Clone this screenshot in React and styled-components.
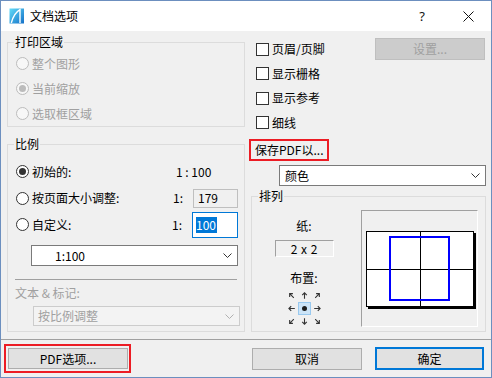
import React from "react";
import styled, { createGlobalStyle, css } from "styled-components";

const FONT = `"Noto Sans CJK SC", "Noto Sans", sans-serif`;

const GlobalStyle = createGlobalStyle`
  html, body { margin: 0; padding: 0; background: #ffffff; }
  body { font-family: ${FONT}; font-size: 12px; }
  *, *::before, *::after { box-sizing: border-box; }
`;

const Window = styled.div`
  width: 492px;
  height: 378px;
  border: 1px solid #6c8fbf;
  background: #f0f0f0;
  display: flex;
  flex-direction: column;
  font-family: ${FONT};
  font-size: 12px;
  line-height: 16px;
  color: #000;
  overflow: hidden;
`;

const TitleBar = styled.div`
  height: 30px;
  flex: none;
  background: #fff;
  display: flex;
  align-items: center;
  padding-left: 8px;
`;

const TitleText = styled.span`
  margin-left: 5px;
  flex: 1;
`;

const CaptionButton = styled.div`
  width: 46px;
  height: 30px;
  display: flex;
  align-items: center;
  justify-content: center;
  font-family: "Noto Sans", sans-serif;
  font-size: 13px;
  color: #111;
`;

const Main = styled.div`
  height: 308px;
  flex: none;
  display: flex;
  gap: 4px;
  padding: 3px 5px 7px 6px;
`;

const LeftCol = styled.div`
  width: 238px;
  display: flex;
  flex-direction: column;
  gap: 9px;
`;

const RightCol = styled.div`
  width: 237px;
  display: flex;
  flex-direction: column;
  padding-top: 3px;
`;

const Group = styled.fieldset`
  margin: ${(p) => p.$margin || "0"};
  min-width: 0;
  border: 1px solid #dcdcdc;
  padding: ${(p) => p.$pad};
`;

const Legend = styled.legend`
  padding: 0 1px;
  margin-left: ${(p) => p.$x}px;
  line-height: 16px;
  font-size: 12px;
  color: #000;
`;

const RadioRow = styled.div`
  height: ${(p) => p.$h}px;
  display: flex;
  align-items: center;
  gap: 3px;
  color: ${(p) => (p.$disabled ? "#a0a0a0" : "#000")};
`;

const RadioCircle = styled.span`
  width: 13px;
  height: 13px;
  flex: none;
  border-radius: 50%;
  border: 1px solid ${(p) => (p.$disabled ? "#bcbcbc" : "#333")};
  background: ${(p) => (p.$disabled ? "#f7f7f7" : "#fff")};
  display: flex;
  align-items: center;
  justify-content: center;
  &::after {
    content: "";
    width: 7px;
    height: 7px;
    border-radius: 50%;
    background: ${(p) => (p.$disabled ? "#bcbcbc" : "#333")};
    display: ${(p) => (p.$checked ? "block" : "none")};
  }
`;

const RadioLabel = styled.span`
  flex: 1;
  white-space: nowrap;
`;

const RatioPrefix = styled.span`
  width: ${(p) => p.$w}px;
  flex: none;
  white-space: nowrap;
`;

const ValueBox = styled.div`
  width: ${(p) => p.$w}px;
  height: ${(p) => p.$h}px;
  flex: none;
  display: flex;
  align-items: center;
  padding-left: ${(p) => p.$pl}px;
  border: 1px solid ${(p) => (p.$focused ? "#0078d7" : "#bfbfbf")};
  background: ${(p) => (p.$focused ? "#fff" : "#f0f0f0")};
`;

const Selected = styled.span`
  background: #0078d7;
  color: #fff;
  line-height: 16px;
  padding: 0 1px 0 0;
`;

const Combo = styled.div`
  width: 207px;
  height: ${(p) => p.$h}px;
  margin-left: ${(p) => p.$ml}px;
  margin-top: ${(p) => p.$mt}px;
  flex: none;
  display: flex;
  align-items: center;
  padding-left: ${(p) => p.$pl}px;
  padding-right: 5px;
  border: 1px solid ${(p) => (p.$disabled ? "#cccccc" : "#7a7a7a")};
  background: ${(p) => (p.$disabled ? "#f3f3f3" : "#fff")};
  color: ${(p) => (p.$disabled ? "#a0a0a0" : "#000")};
`;

const ComboText = styled.span`
  flex: 1;
`;

const Chevron = ({ disabled }) => (
  <svg width="9" height="5" viewBox="0 0 9 5">
    <polyline
      points="0.5,0.5 4.5,4.5 8.5,0.5"
      fill="none"
      stroke={disabled ? "#b0b0b0" : "#333"}
      strokeWidth="1"
    />
  </svg>
);

const Divider = styled.div`
  height: 1px;
  margin: 13px 1px 0 -1px;
  background: #a0a0a0;
`;

const Caption = styled.div`
  margin: 5px 0 0 -1px;
  height: 16px;
  color: ${(p) => (p.$disabled ? "#a0a0a0" : "#000")};
`;

const TopRow = styled.div`
  display: flex;
  justify-content: space-between;
  align-items: flex-start;
`;

const CheckList = styled.div`
  display: flex;
  flex-direction: column;
  padding-left: 7px;
`;

const CheckRow = styled.div`
  height: 24.5px;
  display: flex;
  align-items: center;
  gap: 3px;
`;

const CheckBox = styled.span`
  width: 13px;
  height: 13px;
  border: 1px solid #333;
  background: #fff;
  flex: none;
`;

const Button = styled.div`
  width: ${(p) => p.$w}px;
  height: ${(p) => p.$h}px;
  margin: ${(p) => p.$m || "0"};
  flex: none;
  display: flex;
  align-items: center;
  justify-content: center;
  background: ${(p) => (p.$disabled ? "#cccccc" : "#e1e1e1")};
  border: ${(p) =>
    p.$default ? "2px solid #0078d7" : p.$disabled ? "1px solid #bfbfbf" : "1px solid #adadad"};
  color: ${(p) => (p.$disabled ? "#a0a0a0" : "#000")};
`;

const Highlight = styled.div`
  align-self: ${(p) => (p.$inline ? "auto" : "flex-start")};
  margin-top: ${(p) => p.$mt}px;
  width: ${(p) => (p.$w ? `${p.$w}px` : "auto")};
  height: ${(p) => (p.$h ? `${p.$h}px` : "auto")};
  border: 2px solid #ec1c24;
  display: flex;
  align-items: center;
  padding: ${(p) => p.$pad};
`;

const ArrangeBody = styled.div`
  display: flex;
  gap: 5px;
`;

const ArrangeInfo = styled.div`
  width: 104px;
  display: flex;
  flex-direction: column;
  align-items: center;
  padding-top: 8px;
`;

const InfoLabel = styled.div`
  height: 16px;
  margin-top: ${(p) => p.$mt}px;
`;

const PaperBox = styled.div`
  width: 59px;
  height: 17px;
  margin-top: 6px;
  display: flex;
  align-items: center;
  justify-content: center;
  border-top: 1px solid #a0a0a0;
  border-left: 1px solid #a0a0a0;
  border-bottom: 1px solid #fff;
  border-right: 1px solid #fff;
  line-height: 15px;
  word-spacing: 1px;
`;

const PlaceGrid = styled.div`
  margin-top: 3px;
  display: grid;
  grid-template-columns: repeat(3, 13px);
  grid-auto-rows: 13px;
`;

const PlaceCell = styled.div`
  display: flex;
  align-items: center;
  justify-content: center;
  ${(p) =>
    p.$active &&
    css`
      background: #cce4f7;
      border: 1px solid #99c9ef;
    `}
`;

const Dot = styled.span`
  width: 5px;
  height: 5px;
  border-radius: 50%;
  background: #1e1e1e;
`;

const ArrowSvg = styled.svg`
  transform: rotate(${(p) => p.$angle}deg);
`;

const Arrow = ({ angle }) => (
  <ArrowSvg $angle={angle} width="7" height="7" viewBox="0 0 7 7">
    <path d="M3.5 6.8 V0.9 M1.2 3.2 L3.5 0.9 L5.8 3.2" fill="none" stroke="#333" strokeWidth="1.1" />
  </ArrowSvg>
);

const Preview = styled.div`
  width: 117px;
  height: 117px;
  padding: 20px 0 0 4px;
  border-top: 1px solid #a0a0a0;
  border-left: 1px solid #a0a0a0;
  border-bottom: 1px solid #fff;
  border-right: 1px solid #fff;
`;

const Separator = styled.div`
  height: 1px;
  flex: none;
  background: #a0a0a0;
`;

const Footer = styled.div`
  height: 37px;
  flex: none;
  display: flex;
  align-items: center;
  padding: 0 7px 0 3px;
`;

const FooterRight = styled.div`
  margin-left: auto;
  display: flex;
  align-items: center;
  gap: 13px;
`;

const TitleIcon = () => (
  <svg width="16" height="16" viewBox="0 0 16 16">
    <defs>
      <linearGradient id="tiGrad" x1="0" y1="0" x2="1" y2="1">
        <stop offset="0" stopColor="#62dcf8" />
        <stop offset="1" stopColor="#1470c8" />
      </linearGradient>
    </defs>
    <rect x="0.5" y="0.5" width="14.5" height="15" fill="url(#tiGrad)" />
    <path d="M2.3 15 C3.8 9 6.8 4 11 1.6 L11 15" fill="none" stroke="#fff" strokeWidth="1.4" />
  </svg>
);

const CloseIcon = () => (
  <svg width="11" height="11" viewBox="0 0 11 11">
    <path d="M0.5 0.5 L10.5 10.5 M10.5 0.5 L0.5 10.5" stroke="#111" strokeWidth="1" />
  </svg>
);

const PagePreview = () => (
  <svg width="110" height="78" viewBox="0 0 110 78">
    <rect x="2" y="2" width="108" height="76" fill="#000" />
    <rect x="0.5" y="0.5" width="107" height="75" fill="#fff" stroke="#000" strokeWidth="1" />
    <line x1="54.5" y1="0" x2="54.5" y2="76" stroke="#000" strokeWidth="1" />
    <line x1="0" y1="38.5" x2="108" y2="38.5" stroke="#000" strokeWidth="1" />
    <rect x="24" y="6" width="59" height="63" fill="none" stroke="#0000ff" strokeWidth="2" />
  </svg>
);

const arrows = [
  { a: -45 },
  { a: 0 },
  { a: 45 },
  { a: -90 },
  { center: true },
  { a: 90 },
  { a: -135 },
  { a: 180 },
  { a: 135 },
];

function Radio({ label, checked, disabled, h = 25, children }) {
  return (
    <RadioRow $h={h} $disabled={disabled}>
      <RadioCircle $checked={checked} $disabled={disabled} />
      <RadioLabel>{label}</RadioLabel>
      {children}
    </RadioRow>
  );
}

export default function App() {
  return (
    <>
      <GlobalStyle />
      <Window>
        <TitleBar>
          <TitleIcon />
          <TitleText>文档选项</TitleText>
          <CaptionButton>?</CaptionButton>
          <CaptionButton>
            <CloseIcon />
          </CaptionButton>
        </TitleBar>

        <Main>
          <LeftCol>
            <Group $pad="1px 6px 0 8px">
              <Legend $x={-2}>打印区域</Legend>
              <Radio label="整个图形" disabled />
              <Radio label="当前缩放" disabled checked />
              <Radio label="选取框区域" disabled />
            </Group>

            <Group $pad="6px 6px 5px 8px">
              <Legend $x={-2}>比例</Legend>
              <Radio label="初始的:" checked h={27}>
                <RatioPrefix $w={62}>1 : 100</RatioPrefix>
              </Radio>
              <Radio label="按页面大小调整:" h={26}>
                <RatioPrefix $w={17}>1:</RatioPrefix>
                <ValueBox $w={45} $h={19} $pl={4}>179</ValueBox>
              </Radio>
              <Radio label="自定义:" h={27}>
                <RatioPrefix $w={17}>1:</RatioPrefix>
                <ValueBox $w={46} $h={26} $pl={3} $focused>
                  <Selected>100</Selected>
                </ValueBox>
              </Radio>
              <Combo $h={21} $ml={15} $mt={7} $pl={23}>
                <ComboText>1:100</ComboText>
                <Chevron />
              </Combo>
              <Divider />
              <Caption $disabled>文本 &amp; 标记:</Caption>
              <Combo $h={20} $ml={17} $mt={5} $pl={4} $disabled>
                <ComboText>按比例调整</ComboText>
                <Chevron disabled />
              </Combo>
            </Group>
          </LeftCol>

          <RightCol>
            <TopRow>
              <CheckList>
                <CheckRow>
                  <CheckBox />
                  <span>页眉/页脚</span>
                </CheckRow>
                <CheckRow>
                  <CheckBox />
                  <span>显示栅格</span>
                </CheckRow>
                <CheckRow>
                  <CheckBox />
                  <span>显示参考</span>
                </CheckRow>
                <CheckRow>
                  <CheckBox />
                  <span>细线</span>
                </CheckRow>
              </CheckList>
              <Button $w={110} $h={22} $m="1px 1px 0 0" $disabled>
                设置...
              </Button>
            </TopRow>

            <Highlight $mt={4} $w={80} $h={23} $pad="0 0 0 4px">
              保存PDF以...
            </Highlight>

            <Combo $h={21} $ml={30} $mt={4} $pl={5}>
              <ComboText>颜色</ComboText>
              <Chevron />
            </Combo>

            <Group $pad="6px 7px 3px 0" $margin="2px 0 0 2px">
              <Legend $x={6}>排列</Legend>
              <ArrangeBody>
                <ArrangeInfo>
                  <InfoLabel $mt={0}>纸:</InfoLabel>
                  <PaperBox>2 x 2</PaperBox>
                  <InfoLabel $mt={13}>布置:</InfoLabel>
                  <PlaceGrid>
                    {arrows.map((c, i) => (
                      <PlaceCell key={i} $active={c.center}>
                        {c.center ? <Dot /> : <Arrow angle={c.a} />}
                      </PlaceCell>
                    ))}
                  </PlaceGrid>
                </ArrangeInfo>
                <Preview>
                  <PagePreview />
                </Preview>
              </ArrangeBody>
            </Group>
          </RightCol>
        </Main>

        <Separator />

        <Footer>
          <Highlight $inline $mt={0} $pad="2px 1px 2px 2px">
            <Button $w={120} $h={21}>PDF选项...</Button>
          </Highlight>
          <FooterRight>
            <Button $w={110} $h={22}>取消</Button>
            <Button $w={109} $h={23} $default>确定</Button>
          </FooterRight>
        </Footer>
      </Window>
    </>
  );
}
